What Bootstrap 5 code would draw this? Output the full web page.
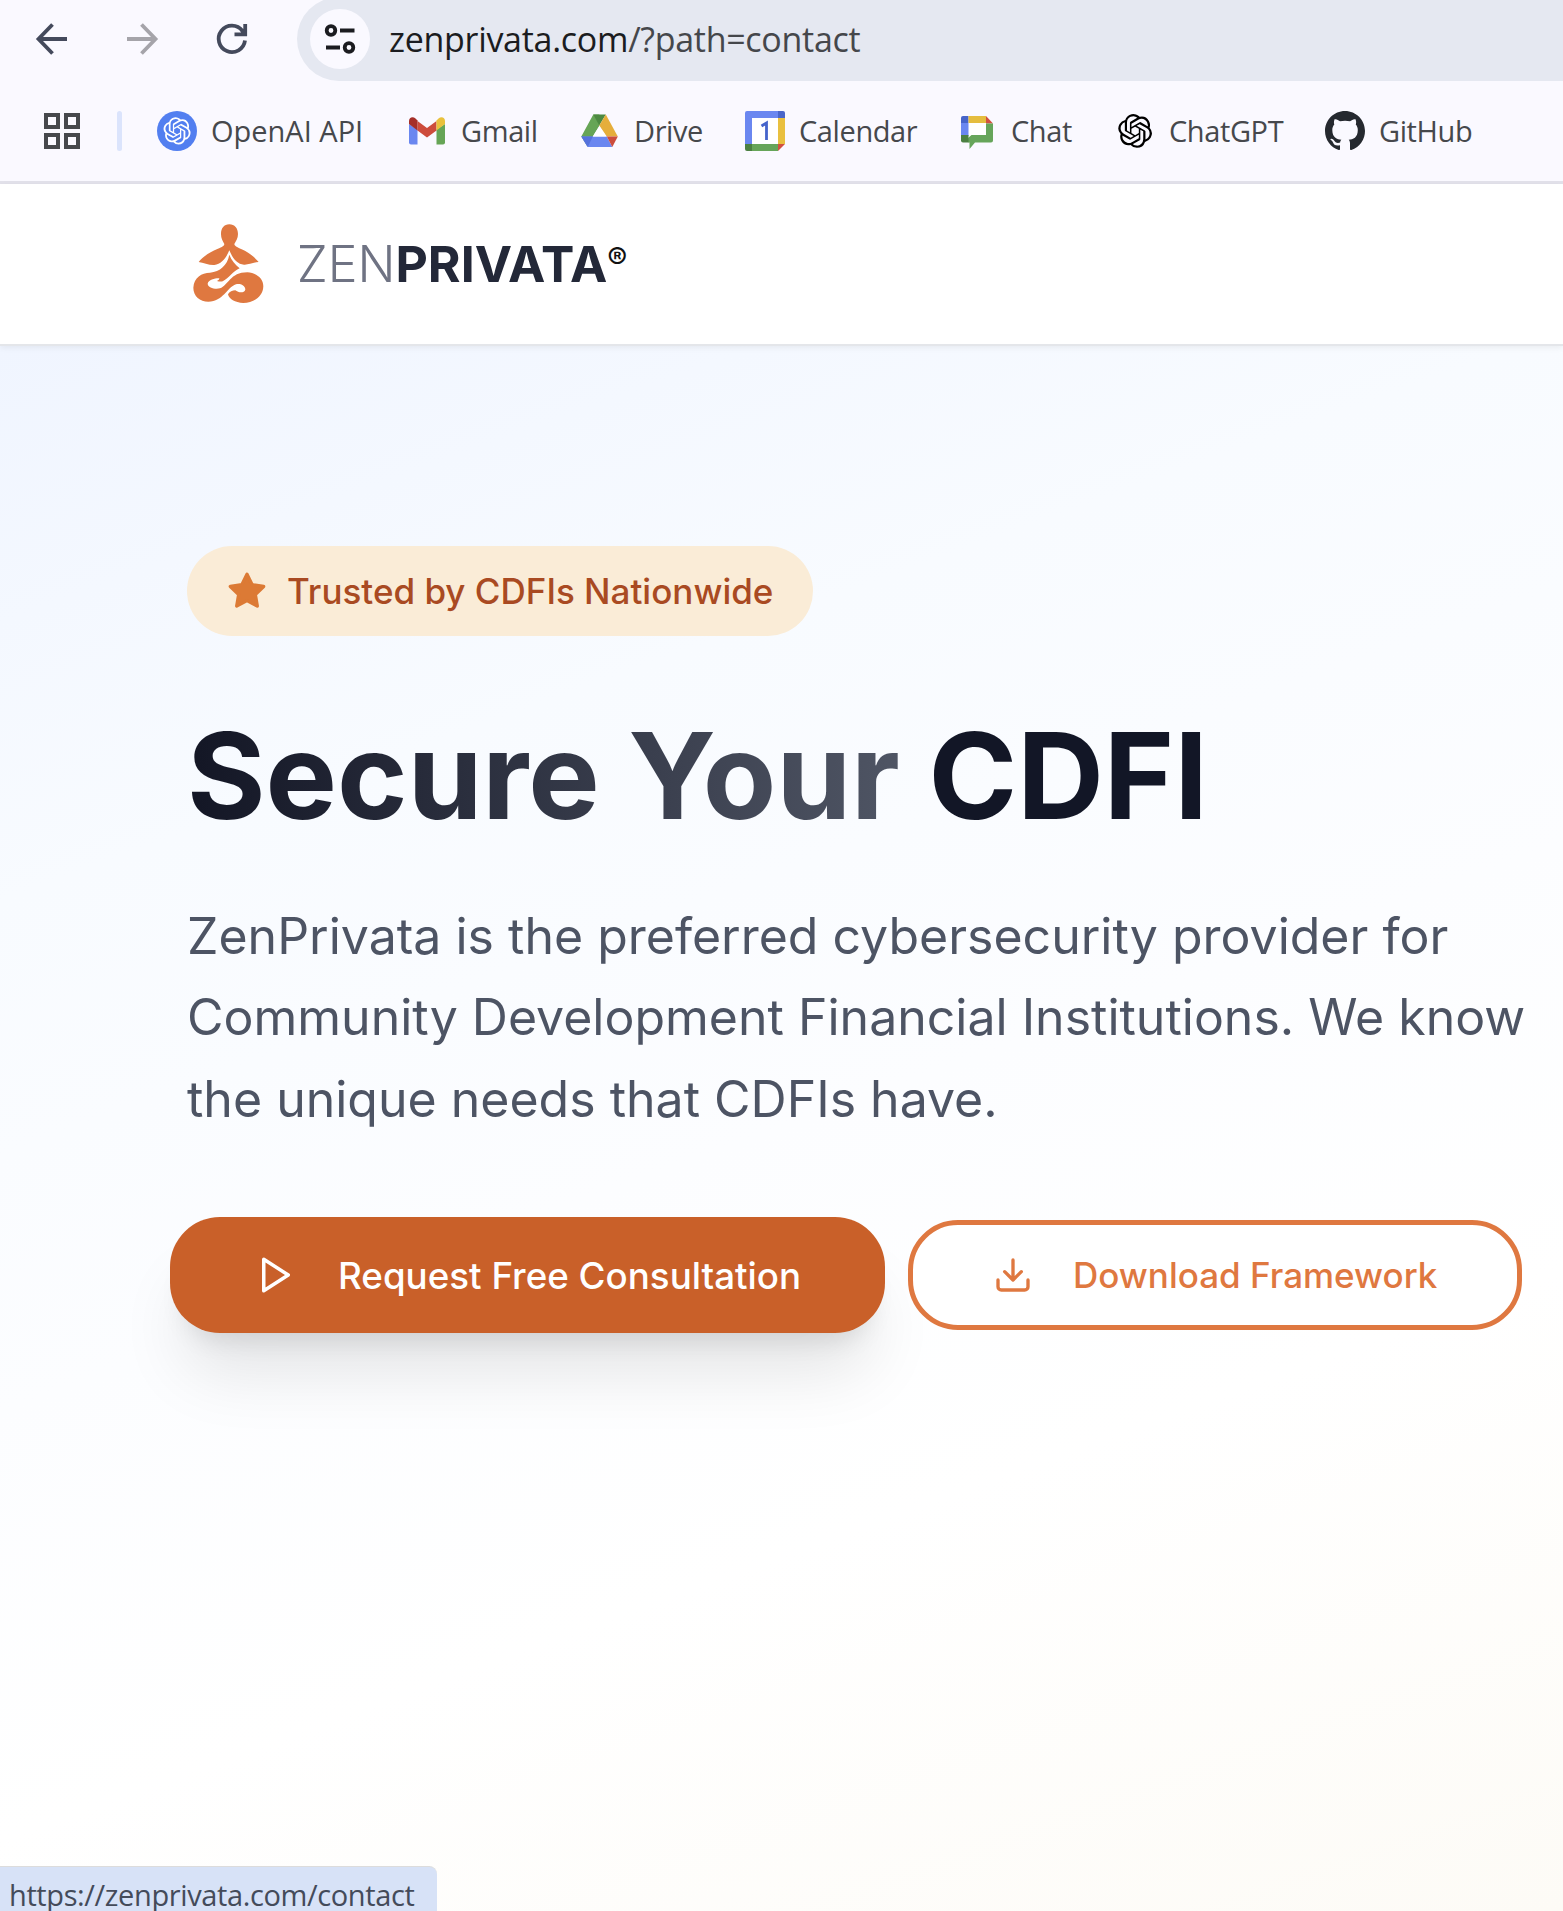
<!DOCTYPE html>
<html lang="en">
<head>
<meta charset="utf-8">
<meta name="viewport" content="width=device-width, initial-scale=1">
<title>ZenPrivata</title>
<link href="https://cdn.jsdelivr.net/npm/bootstrap@5.3.0/dist/css/bootstrap.min.css" rel="stylesheet">
<script src="https://cdn.jsdelivr.net/npm/bootstrap@5.3.0/dist/js/bootstrap.bundle.min.js"></script>
<style>
  html, body { height: 1911px; overflow: hidden; }
  body { font-family: Inter, sans-serif; background: #fff; }
  svg { display: block; flex: none; }
  .browser-ui { height: 184px; background: #faf9ff; border-bottom: 3px solid #e2e1ea; font-family: "Open Sans", "Noto Sans", sans-serif; }
  .toolbar { height: 81px; padding-left: 32px; }
  .tool-icons { height: 78px; gap: 50px; }
  .omnibox { height: 84px; margin-top: -3px; margin-left: 45px; padding-left: 13px; border-radius: 42px 0 0 42px; background: #e5e8f1; }
  .site-info { width: 60px; height: 60px; background: #faf9ff; }
  .url-text { margin-left: 19px; font-size: 34px; letter-spacing: -.29px; color: #45474b; white-space: nowrap; line-height: 44px; }
  .url-text span { color: #1b1c20; }
  .bookmarks { height: 100px; padding-left: 44px; }
  .bm-divider { width: 5px; height: 40px; border-radius: 3px; background: #dbe4fc; margin-left: 37px; margin-right: 35px; }
  .bm-list { display: grid; grid-template-columns: 250px 173px 165px 212px 158px 210px auto; font-size: 29px; line-height: 40px; letter-spacing: -.4px; color: #46484c; white-space: nowrap; }
  .bm-list > div { gap: 14px; }
  .bm-list > div:first-child { letter-spacing: 0; }
  .bm-list span { margin-top: -1px; }
  .site-header { height: 162px; border-bottom: 2px solid #e4e6ea; padding-left: 190px; background: #fff; box-shadow: 0 2px 6px rgba(0,0,0,.06); position: relative; z-index: 1; }
  .brand-name { font-size: 50px; line-height: 60px; margin-left: 30px; color: #232838; font-weight: 700; }
  .brand-name span { font-weight: 300; color: #6f7383; }
  .brand-name sup { font-size: 30px; font-weight: 500; color: #111; top: -13px; line-height: 0; vertical-align: baseline; }
  .hero { height: 1565px; padding: 200px 0 0 187px; background: linear-gradient(160deg, #f0f5ff 0%, #f8fbff 26%, #fcfdff 50%, #fff 70%, #fdfbf6 100%); }
  .trust-pill { height: 90px; padding: 0 40px; gap: 20px; background: #faecd7; color: #a94a22; font-size: 35px; font-weight: 500; white-space: nowrap; }
  .hero-title { margin: 65px 0 0; font-size: 120px; line-height: 150px; font-weight: 700; color: #121626; white-space: nowrap; }
  .hero-title span { background: linear-gradient(90deg, #131625, #4f5564); -webkit-background-clip: text; background-clip: text; color: transparent; }
  .hero-text { margin: 45px 0 0; font-size: 50px; line-height: 81.25px; color: #4d5464; white-space: nowrap; }
  .actions { margin: 77px 0 0 -17px; gap: 23px; }
  .cta { border-radius: 50px; font-weight: 500; padding: 0; justify-content: flex-start; white-space: nowrap; }
  .cta-main, .cta-main:hover { width: 715px; height: 116px; padding-left: 85px; gap: 41px; background: #c96029; color: #fff; border: 0; font-size: 36.75px; box-shadow: 0 52px 66px -13px rgba(0,0,0,.1), 0 21px 26px -16px rgba(0,0,0,.12); }
  .cta-main span { margin-top: 1px; }
  .cta-line, .cta-line:hover { width: 614px; height: 110px; padding-left: 80px; gap: 40px; background: #fff; color: #df7840; border: 5px solid #df7840; font-size: 35px; }
  .status-bubble { left: 0; bottom: 0; width: 437px; height: 45px; padding: 12px 0 0 9px; background: #d7e2f7; border-top: 1px solid #dcdcdc; border-top-right-radius: 8px; font: 29px/44px "Open Sans", sans-serif; letter-spacing: -.38px; color: #444b5a; white-space: nowrap; overflow: hidden; }
</style>
</head>
<body>
<header class="browser-ui">
  <div class="toolbar d-flex">
    <div class="tool-icons d-flex align-items-center">
      <svg width="40" height="40" viewBox="0 0 40 40" fill="none" stroke="#444a5c" stroke-width="3.8"><path d="M35 20H7M20.500 5.500 6.500 20 20.500 34.500"/></svg>
      <svg width="40" height="40" viewBox="0 0 40 40" fill="none" stroke="#a5a4aa" stroke-width="3.8"><path d="M5 20H33M19.500 5.500 33.500 20 19.500 34.500"/></svg>
      <svg width="40" height="40" viewBox="0 0 40 40" fill="none" stroke="#444a5c" stroke-width="3.800"><path d="M33 21.500A13.200 13.200 0 1 1 30.500 12L33 15.500M22.500 15.400H33.200V5"/></svg>
    </div>
    <div class="omnibox d-flex align-items-center flex-grow-1">
      <div class="site-info rounded-circle d-flex align-items-center justify-content-center">
        <svg width="32" height="32" viewBox="0 0 32 32" fill="none" stroke="#1b1c20" stroke-width="3.800"><circle cx="7" cy="7.500" r="4.300"/><circle cx="25" cy="24.500" r="4.300"/><path d="M16 7.500H30.500M2 24.500H16"/></svg>
      </div>
      <div class="url-text"><span>zenprivata.com</span>/?path=contact</div>
    </div>
  </div>
  <nav class="bookmarks d-flex align-items-center">
    <svg width="36" height="36" viewBox="0 0 36 36" fill="none" stroke="#46484c" stroke-width="4"><path d="M2 2H14V14H2ZM22 2H34V14H22ZM2 22H14V34H2ZM22 22H34V34H22Z"/></svg>
    <div class="bm-divider"></div>
    <div class="bm-list">
      <div class="d-flex align-items-center">
        <svg width="40" height="40" viewBox="0 0 40 40" color="#fff"><circle cx="20" cy="20" r="20" fill="#527ff0"/><g transform="translate(6.500 6.300) scale(1.130)"><path id="knot" fill="currentColor" d="M22.282 9.821a5.985 5.985 0 0 0-.516-4.910 6.046 6.046 0 0 0-6.510-2.900A6.065 6.065 0 0 0 4.981 4.182a5.985 5.985 0 0 0-3.998 2.900 6.046 6.046 0 0 0 .743 7.097 5.980 5.980 0 0 0 .511 4.911 6.051 6.051 0 0 0 6.515 2.900A5.985 5.985 0 0 0 13.260 24a6.056 6.056 0 0 0 5.772-4.206 5.989 5.989 0 0 0 3.998-2.900 6.056 6.056 0 0 0-.748-7.073zm-9.022 12.608a4.476 4.476 0 0 1-2.876-1.041l.142-.080 4.778-2.758a.795.795 0 0 0 .393-.681v-6.737l2.020 1.169a.071.071 0 0 1 .038.052v5.583a4.504 4.504 0 0 1-4.495 4.494zm-9.661-4.125a4.471 4.471 0 0 1-.535-3.014l.142.085 4.783 2.758a.771.771 0 0 0 .781 0l5.843-3.369v2.332a.080.080 0 0 1-.033.062L9.740 19.950a4.499 4.499 0 0 1-6.141-1.646zM2.341 7.896a4.485 4.485 0 0 1 2.366-1.973V11.600a.766.766 0 0 0 .388.677l5.814 3.354-2.020 1.169a.076.076 0 0 1-.071 0l-4.830-2.787A4.504 4.504 0 0 1 2.341 7.872zm16.596 3.856L13.104 8.364 15.119 7.200a.076.076 0 0 1 .071 0l4.830 2.791a4.494 4.494 0 0 1-.677 8.104v-5.677a.790.790 0 0 0-.407-.667zm2.011-3.023l-.142-.085-4.774-2.782a.776.776 0 0 0-.785 0L9.409 9.230V6.897a.066.066 0 0 1 .028-.062l4.830-2.787a4.499 4.499 0 0 1 6.680 4.660zM8.307 12.863l-2.020-1.164a.080.080 0 0 1-.038-.057V6.074a4.499 4.499 0 0 1 7.376-3.454l-.142.081L8.704 5.459a.795.795 0 0 0-.393.681zm1.098-2.365l2.602-1.500 2.607 1.500v2.999l-2.597 1.500-2.607-1.500Z"/></g></svg>
        <span>OpenAI API</span>
      </div>
      <div class="d-flex align-items-center">
        <svg width="40" height="40" viewBox="0 0 40 40"><path fill="#6a87f0" d="M2 13V31.500Q2 33.500 4 33.500H10.500V18.500Z"/><path fill="#66a556" d="M38 13V31.500Q38 33.500 36 33.500H29.500V18.500Z"/><path fill="#cd4c3c" d="M10.500 10 20 17 29.500 10V19.500L20 26.500 10.500 19.500Z"/><path fill="#a52f28" d="M2 13V10C2 6 6 5 8.500 7.500L10.500 9.500V19.500L2 13Z"/><path fill="#e9c13c" d="M38 13V10C38 6 34 5 31.500 7.500L29.500 9.500V19.500L38 13Z"/></svg>
        <span>Gmail</span>
      </div>
      <div class="d-flex align-items-center">
        <svg width="40" height="40" viewBox="0.7 0 40 40"><path fill="#66a556" d="M14 3.500H20V15L13.500 25.500 8 35.500 2 25.500Z"/><path fill="#4d8a42" d="M14 3.500H26.500L20 14.500Z"/><path fill="#e5ae3b" d="M26.500 3.500 38.500 25.500H27.500L20 14.500Z"/><path fill="#6a87f0" d="M2 25.500H27.500L33 36H8.500Z"/><path fill="#5572dc" d="M2 25.500H13.500L8.500 36Z"/><path fill="#cc4d3c" d="M27.500 25.500H38.500L33 36Z"/><path fill="#fff" d="M20 15 27 25.500H13.500Z"/></svg>
        <span>Drive</span>
      </div>
      <div class="d-flex align-items-center">
        <svg width="40" height="40" viewBox="0 0 40 40"><path fill="#6a87f0" d="M2 0H33V7H7V33H0V2Q0 0 2 0Z"/><path fill="#4966ca" d="M33 0H38Q40 0 40 2V7H33Z"/><path fill="#e9c03f" d="M33 7H40V33H33Z"/><path fill="#66a559" d="M7 33H33V40H7Z"/><path fill="#4b8042" d="M0 33H7V40H2Q0 40 0 38Z"/><path fill="#d2503f" d="M33 33H40L33 40Z"/><path fill="#fff" d="M7 7H33V33H7Z"/><path d="M16.500 15 21.500 12V29" fill="none" stroke="#4564cb" stroke-width="2.800"/></svg>
        <span>Calendar</span>
      </div>
      <div class="d-flex align-items-center">
        <svg width="40" height="40" viewBox="0 0 40 40"><path fill="#fff" d="M10 11H30V26H10Z"/><path fill="#6a87f0" d="M4 12H11.500V25H4Z"/><path fill="#4664c9" d="M6 5H11.500V12H4V7Q4 5 6 5Z"/><path fill="#e5bd3e" d="M11.500 5H29V12H11.500Z"/><path fill="#d2503f" d="M29 5 36 12.500H29Z"/><path fill="#66a55a" d="M29 12.500H36V29.500Q36 31.500 34 31.500H18L12.500 38V31.500H11V27L14.500 24H29Z"/><path fill="#4b8042" d="M4 24H11.500V31.500H6Q4 31.500 4 29.500Z"/></svg>
        <span>Chat</span>
      </div>
      <div class="d-flex align-items-center">
        <svg width="40" height="40" viewBox="0 0 40 40" color="#000"><g transform="translate(3.200 3) scale(1.410)"><use href="#knot"/></g></svg>
        <span>ChatGPT</span>
      </div>
      <div class="d-flex align-items-center">
        <svg width="40" height="40" viewBox="0 0 16 16" fill="#25292f"><path d="M8 0C3.580 0 0 3.580 0 8c0 3.540 2.290 6.530 5.470 7.590.4.070.55-.17.55-.38 0-.19-.01-.82-.01-1.490-2.010.37-2.530-.49-2.690-.94-.09-.23-.48-.94-.82-1.130-.28-.15-.68-.52-.01-.53.63-.01 1.080.58 1.230.82.72 1.210 1.870.87 2.330.66.07-.52.28-.87.51-1.070-1.780-.2-3.640-.89-3.640-3.950 0-.87.31-1.590.82-2.150-.08-.2-.36-1.020.08-2.120 0 0 .67-.21 2.200.82.64-.18 1.320-.27 2-.27s1.360.09 2 .27c1.530-1.040 2.200-.82 2.200-.82.44 1.100.16 1.920.08 2.120.51.56.82 1.270.82 2.150 0 3.070-1.870 3.750-3.650 3.950.29.25.54.73.54 1.480 0 1.070-.01 1.930-.01 2.200 0 .21.15.46.55.38A8.010 8.010 0 0 0 16 8c0-4.420-3.580-8-8-8"/></svg>
        <span>GitHub</span>
      </div>
    </div>
  </nav>
</header>

<div class="site-header d-flex align-items-center">
  <svg width="76.670" height="85.330" viewBox="60 62 230 256" fill="#df7840"><path d="M178 72C194 72 204 84 204 101C204 114 198 122 193 131C193 136 200 140 215 147C240 158 255 172 266 185C250 186 235 194 222 193C200 192 186 170 178 150C170 170 155 192 133 194C118 195 100 187 86 185C96 171 118 156 142 146C158 140 163 136 163 131C158 122 153 114 153 101C153 84 162 72 178 72Z"/><path d="M178 163C184 180 196 192 209 204C190 212 175 235 158 243C152 245 146 243 141 242C146 240 148 237 148 234C138 233 115 238 113 250C114 262 135 268 150 264C175 256 180 216 232 216C262 218 280 236 280 258C279 290 250 308 220 308C195 307 177 296 174 282C178 274 188 270 196 270C205 277 222 280 226 268C226 255 210 249 198 252C170 262 160 304 115 304C90 304 70 288 70 262C72 230 95 218 120 217C150 214 172 195 178 163Z"/></svg>
  <div class="brand-name"><span>ZEN</span>PRIVATA<sup>®</sup></div>
</div>

<main class="hero">
  <div class="trust-pill d-inline-flex align-items-center rounded-pill">
    <svg width="40" height="40" viewBox="0 0 24 24" fill="#dc7a35" stroke="#dc7a35" stroke-width="2" stroke-linejoin="round"><path d="M12 2 15.090 8.260 22 9.270 17 14.140 18.180 21.020 12 17.770 5.820 21.020 7 14.140 2 9.270 8.910 8.260Z"/></svg>
    <span>Trusted by CDFIs Nationwide</span>
  </div>
  <h1 class="hero-title"><span>Secure Your</span> CDFI</h1>
  <p class="hero-text">ZenPrivata is the preferred cybersecurity provider for<br>Community Development Financial Institutions. We know<br>the unique needs that CDFIs have.</p>
  <div class="actions d-flex align-items-center">
    <button class="btn cta cta-main d-flex align-items-center">
      <svg width="42" height="42" viewBox="0 0 24 24" fill="none" stroke="currentColor" stroke-width="2" stroke-linejoin="round"><path d="M5 3 19 12 5 21Z"/></svg>
      <span>Request Free Consultation</span>
    </button>
    <button class="btn cta cta-line d-flex align-items-center">
      <svg width="40" height="40" viewBox="0 0 24 24" fill="none" stroke="currentColor" stroke-width="2" stroke-linecap="round" stroke-linejoin="round"><path d="M21 15V19A2 2 0 0 1 19 21H5A2 2 0 0 1 3 19V15M7 10 12 15 17 10M12 15V3"/></svg>
      <span>Download Framework</span>
    </button>
  </div>
</main>

<div class="status-bubble position-fixed d-flex align-items-center">https://zenprivata.com/contact</div>
</body>
</html>
